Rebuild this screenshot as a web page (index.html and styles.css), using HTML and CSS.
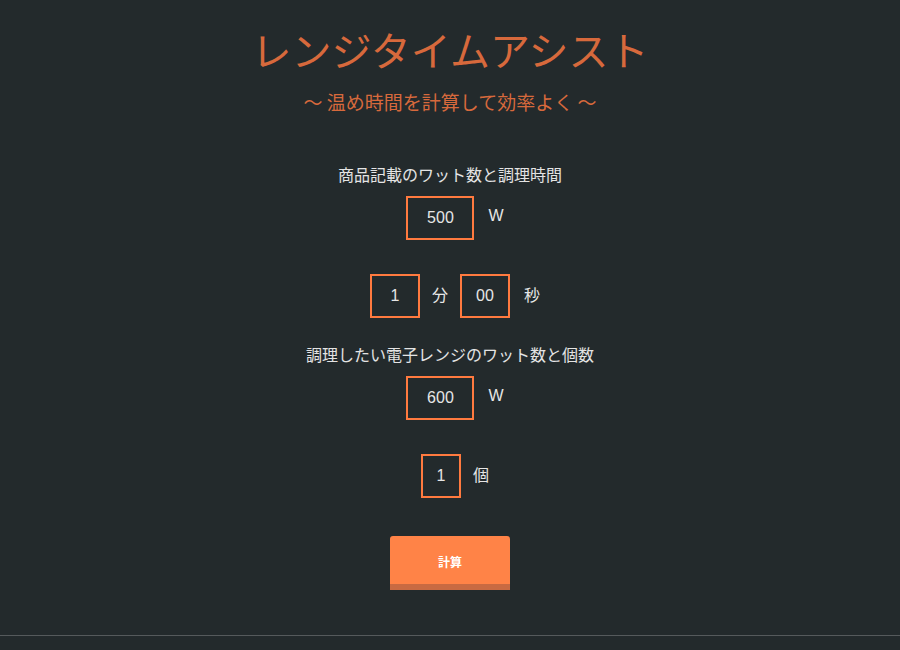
FILE: index.html
```html
<!DOCTYPE html>
<html lang="ja">
<head>
<meta charset="utf-8">
<title>レンジタイムアシスト</title>
<link rel="stylesheet" href="styles.css">
</head>
<body>
<main class="app">
  <header class="head">
    <h1 class="title">レンジタイムアシスト</h1>
    <p class="subtitle">〜 温め時間を計算して効率よく 〜</p>
  </header>

  <section class="group">
    <p class="label">商品記載のワット数と調理時間</p>
    <div class="row">
      <div class="box box-wide">500</div>
      <span class="unit unit-w">W</span>
    </div>
    <div class="row row-spaced">
      <div class="box box-mid">1</div>
      <span class="unit">分</span>
      <div class="box box-mid">00</div>
      <span class="unit unit-w">秒</span>
    </div>
  </section>

  <section class="group group-second">
    <p class="label">調理したい電子レンジのワット数と個数</p>
    <div class="row">
      <div class="box box-wide">600</div>
      <span class="unit unit-w">W</span>
    </div>
    <div class="row row-spaced">
      <div class="box box-small">1</div>
      <span class="unit">個</span>
    </div>
  </section>

  <div class="actions">
    <button class="calc">計算</button>
  </div>
</main>
<footer class="foot"></footer>
</body>
</html>
```

FILE: styles.css
```css
html, body {
  margin: 0;
  padding: 0;
  background: #232a2c;
}
body {
  font-family: "Noto Sans CJK JP", "Liberation Sans", sans-serif;
  color: #e2e2e2;
  height: 650px;
  overflow: hidden;
}
.app {
  display: flex;
  flex-direction: column;
  align-items: center;
  padding-top: 23px;
}
.head {
  display: flex;
  flex-direction: column;
  align-items: center;
}
.title {
  margin: 0;
  font-size: 40px;
  line-height: 52px;
  font-weight: 400;
  color: #d7693c;
}
.subtitle {
  margin: 14px 0 0;
  font-size: 19px;
  line-height: 26px;
  color: #d7693c;
}
.group {
  display: flex;
  flex-direction: column;
  align-items: center;
  margin-top: 47px;
}
.group-second {
  margin-top: 24px;
}
.label {
  margin: 0;
  font-size: 16px;
  line-height: 24px;
  color: #e4e4e4;
}
.row {
  display: flex;
  align-items: center;
  gap: 12px;
  padding-left: 10px;
  margin-top: 10px;
}
.row-spaced {
  margin-top: 34px;
}
.box {
  box-sizing: border-box;
  height: 44px;
  border: 2px solid #ff7a3f;
  display: flex;
  align-items: center;
  justify-content: center;
  font-family: "Liberation Sans", Arial, sans-serif;
  font-size: 16px;
  color: #e6e6e6;
}
.box-wide { width: 68px; }
.box-mid { width: 50px; }
.box-small { width: 40px; }
.unit {
  font-family: "Liberation Sans", "Noto Sans CJK JP", sans-serif;
  font-size: 16px;
  color: #e6e6e6;
  margin-top: -4px;
}
.unit-w {
  padding-left: 2px;
}
.actions {
  margin-top: 38px;
}
.calc {
  box-sizing: border-box;
  width: 120px;
  height: 54px;
  border: 0;
  border-bottom: 6px solid #c86a42;
  border-radius: 3px 3px 0 0;
  background: #ff8347;
  color: #ffffff;
  font-family: "Noto Sans CJK JP", sans-serif;
  font-size: 12px;
  font-weight: 700;
  padding: 3px 0 0;
}
.foot {
  margin-top: 45px;
  border-top: 1px solid #555a5c;
}
```
